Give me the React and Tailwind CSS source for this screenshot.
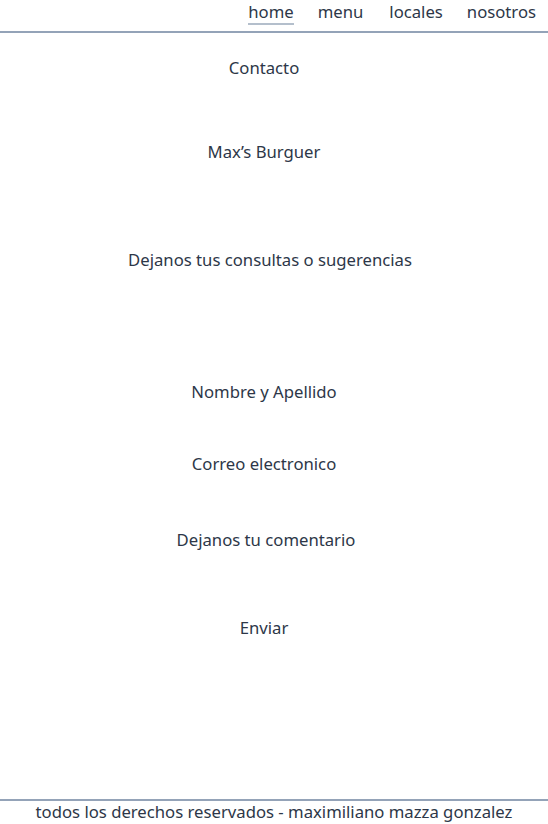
export default function App() {
  return (
    <div className="min-h-[824px] flex flex-col bg-white text-[#2d3748] text-[16.7px]" style={{ fontFamily: '"Noto Sans", sans-serif' }}>
      {/* header */}
      <header className="h-[33px] border-b-2 border-[#94a3b8] flex justify-end items-start pr-[12px]">
        <nav className="flex gap-[24px] pt-[1px] leading-[22px]">
          <a className="border-b-2 border-[#b4bfcc]">home</a>
          <a>menu</a>
          <a className="ml-[2px]">locales</a>
          <a>nosotros</a>
        </nav>
      </header>

      {/* main */}
      <main className="flex-1 flex flex-col items-center pr-[20px]">
        <h1 className="mt-[24px] leading-[22px]">Contacto</h1>
        <h2 className="mt-[62px] leading-[22px]">Max’s Burguer</h2>
        <p className="mt-[86px] leading-[22px] ml-[12px]">Dejanos tus consultas o sugerencias</p>

        <form className="flex flex-col items-center">
          <label className="mt-[110px] leading-[22px]">Nombre y Apellido</label>
          <label className="mt-[50px] leading-[22px]">Correo electronico</label>
          <label className="mt-[54px] leading-[22px] ml-[4px]">Dejanos tu comentario</label>
          <button type="button" className="mt-[66px] leading-[22px]">Enviar</button>
        </form>
      </main>

      {/* footer */}
      <footer className="border-t-2 border-[#94a3b8] h-[25px] flex justify-center leading-[22px]">
        todos los derechos reservados - maximiliano mazza gonzalez
      </footer>
    </div>
  );
}
